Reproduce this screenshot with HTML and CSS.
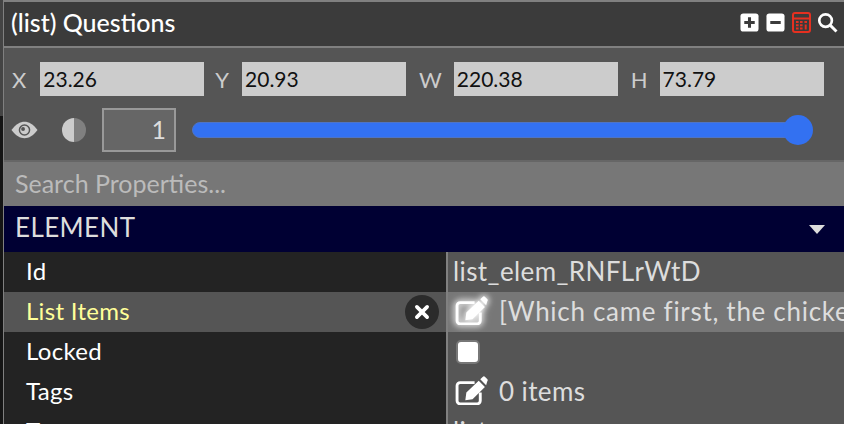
FILE: index.html
```html
<!DOCTYPE html>
<html lang="en">
<head>
<meta charset="utf-8">
<title>Questions</title>
<link rel="stylesheet" href="styles.css">
</head>
<body>
<div class="frame">
  <div class="panel">
    <header class="title-bar">
      <span class="title">(list) Questions</span>
      <div class="tools">
        <svg class="tool" viewBox="0 0 20 20"><rect x="0.500" y="0.500" width="19" height="19" rx="3" fill="#fff"/><path d="M10 4.500v11M4.500 10h11" stroke="#3b3b3b" stroke-width="3.200"/></svg>
        <svg class="tool" viewBox="0 0 20 20"><rect x="0.500" y="0.500" width="19" height="19" rx="3" fill="#fff"/><path d="M4.500 10h11" stroke="#3b3b3b" stroke-width="3.200"/></svg>
        <svg class="tool calc" viewBox="0 0 19 21"><rect x="1" y="1" width="17" height="19" rx="2" fill="none" stroke="#e53020" stroke-width="2"/><path d="M1 6.500h17" stroke="#e53020" stroke-width="2"/><path d="M4 10h2.600M8 10h2.600M12.400 10h2.600M4 13.300h2.600M8 13.300h2.600M4 16.600h2.600M8 16.600h2.600M13.700 12.400v5" stroke="#e53020" stroke-width="2"/></svg>
        <svg class="tool magnifier" viewBox="0 0 22 22"><circle cx="9" cy="9" r="6.600" fill="none" stroke="#fff" stroke-width="2.800"/><path d="M14 14l6.400 6.400" stroke="#fff" stroke-width="3"/></svg>
      </div>
    </header>
    <section class="geometry">
      <div class="coords">
        <label class="coord"><span class="coord-label">X</span><span class="coord-value">23.26</span></label>
        <label class="coord"><span class="coord-label">Y</span><span class="coord-value">20.93</span></label>
        <label class="coord"><span class="coord-label">W</span><span class="coord-value">220.38</span></label>
        <label class="coord"><span class="coord-label">H</span><span class="coord-value">73.79</span></label>
      </div>
      <div class="opacity">
        <svg class="eye" viewBox="0 0 28 18"><path d="M0.500 9C5 3 9.500 .5 14 .5S23 3 27.500 9C23 15 18.500 17.500 14 17.500S5 15 .5 9z" fill="#ccc"/><circle cx="14" cy="9" r="6" fill="#555"/><circle cx="14" cy="9" r="4.500" fill="#ccc"/><circle cx="12.500" cy="8" r="2" fill="#555"/></svg>
        <svg class="contrast" viewBox="0 0 24 24"><path d="M12 0a12 12 0 0 0 0 24z" fill="#ccc"/><path d="M12 0a12 12 0 0 1 0 24z" fill="#808080"/></svg>
        <div class="opacity-value">1</div>
        <div class="slider"><div class="thumb"></div></div>
      </div>
    </section>
    <div class="search-box">Search Properties...</div>
    <div class="group"><span>ELEMENT</span><span class="caret"></span></div>
    <div class="rows">
      <div class="row"><div class="name">Id</div><div class="value">list_elem_RNFLrWtD</div></div>
      <div class="row active">
        <div class="name">List Items<span class="clear"><svg viewBox="0 0 14 14"><path d="M2.500 2.500l9 9M11.500 2.500l-9 9" stroke="#fff" stroke-width="3.200" stroke-linecap="round"/></svg></span></div>
        <div class="value">
          <svg class="edit glow" viewBox="0 0 32 28"><path d="M19 6.400H5a3 3 0 0 0-3 3V24a3 3 0 0 0 3 3h16.500a3 3 0 0 0 3-3v-8" fill="none" stroke="#fff" stroke-width="2.800"/><path d="M10 23.500l1-7.500L23 4.500l6 6-12 12zM24.500 3l2.300-2.200c.8-.7 1.700-.7 2.400 0l2 2c.7.7.7 1.700 0 2.400L30.200 9z" fill="#fff"/></svg>
          <span class="clip">[Which came first, the chicken or the egg?]</span>
        </div>
      </div>
      <div class="row"><div class="name">Locked</div><div class="value"><span class="check"></span></div></div>
      <div class="row">
        <div class="name">Tags</div>
        <div class="value">
          <svg class="edit" viewBox="0 0 32 28"><path d="M19 6.400H5a3 3 0 0 0-3 3V24a3 3 0 0 0 3 3h16.500a3 3 0 0 0 3-3v-8" fill="none" stroke="#fff" stroke-width="2.800"/><path d="M10 23.500l1-7.500L23 4.500l6 6-12 12zM24.500 3l2.300-2.200c.8-.7 1.700-.7 2.400 0l2 2c.7.7.7 1.700 0 2.400L30.200 9z" fill="#fff"/></svg>
          <span>0 items</span>
        </div>
      </div>
      <div class="row"><div class="name">Type</div><div class="value">list</div></div>
    </div>
  </div>
</div>
</body>
</html>
```
FILE: styles.css
```css
* { box-sizing: border-box; }
html, body { margin: 0; height: 100%; overflow: hidden; }
body { background: #111; font-family: Lato, "Noto Sans", sans-serif; }
.frame { height: 424px; width: 844px; padding-left: 3px; background: linear-gradient(#444 116px, #151515 116px); }
.panel { height: 424px; overflow: hidden; border-left: 1px solid #808080; border-top: 2px solid #808080; background: #232323; }
.title-bar { height: 46px; border-bottom: 2px solid #808080; background: #3b3b3b; display: flex; align-items: center; justify-content: space-between; padding: 0 6px 3px 7px; }
.title { color: #fff; font-size: 25px; font-weight: 500; margin-bottom: 1px; }
.tools { display: flex; align-items: center; gap: 7px; }
.tool { width: 19px; height: 19px; display: block; }
.calc { width: 19px; height: 21px; }
.magnifier { width: 21px; height: 21px; margin-left: -1px; }
.geometry { height: 114px; background: #555; border-bottom: 2px solid #666; padding: 14px 0 0 8px; }
.coords { display: flex; height: 34px; gap: 13px; }
.coord { display: flex; align-items: center; gap: 12px; }
.coord:first-child { gap: 14px; margin-right: -2px; }
.coord:nth-child(2) { gap: 13px; }
.coord-label { color: #ccc; font-size: 22px; }
.coord-value { width: 164px; height: 34px; background: #ccc; color: #111; font-size: 21px; line-height: 34px; padding-left: 3px; }
.opacity { display: flex; align-items: center; margin: 12px 0 0 -1px; height: 44px; }
.eye { width: 27px; height: 18px; }
.contrast { width: 24px; height: 24px; margin-left: 24px; }
.opacity-value { width: 74px; height: 44px; margin-left: 16px; border: 2px solid #999; background: #666; color: #ddd; text-align: right; padding-right: 8px; font-size: 25px; line-height: 38px; }
.slider { position: relative; width: 606px; height: 16px; margin-left: 16px; border-radius: 8px; background: #3371f1; border: 1px solid #4f74c4; }
.thumb { position: absolute; right: -16px; top: -8px; width: 30px; height: 30px; border-radius: 50%; background: #3371f1; }
.search-box { height: 44px; background: #777; color: #bbb; font-size: 25px; line-height: 42px; padding-left: 11px; }
.group { height: 46px; background: #000033; color: #ddd; font-size: 26px; letter-spacing: .4px; display: flex; align-items: center; justify-content: space-between; padding: 0 19px 5px 11px; }
.caret { width: 0; height: 0; margin-top: 5px; border-left: 8px solid transparent; border-right: 8px solid transparent; border-top: 9px solid #ddd; }
.row { display: flex; height: 40px; font-size: 24px; letter-spacing: .3px; line-height: 38px; }
.name { position: relative; width: 442px; padding-left: 22px; color: #fff; background: #232323; }
.value { flex: 1; min-width: 0; display: flex; align-items: center; border-left: 2px solid #808080; padding: 0 0 3px 5px; background: #555; color: #ddd; font-size: 26px; letter-spacing: .4px; white-space: nowrap; overflow: hidden; }
.row.active .name { background: #555; color: #ffff99; }
.row.active .value { background: #777; }
.clear { position: absolute; right: 7px; top: 3px; width: 34px; height: 34px; border-radius: 50%; background: #2b2b2b; display: flex; align-items: center; justify-content: center; }
.clear svg { width: 16px; height: 16px; }
.edit { width: 33px; height: 29px; margin-right: 11px; margin-left: 2px; flex: none; }
.glow { filter: drop-shadow(0 0 3px #fff) drop-shadow(0 0 3px rgba(255,255,255,.6)); }
.clip { overflow: hidden; letter-spacing: .7px; }
.check { width: 24px; height: 24px; margin: 3px 0 0 3px; border-radius: 5px; background: #fff; border: 2px solid #777; }
```
